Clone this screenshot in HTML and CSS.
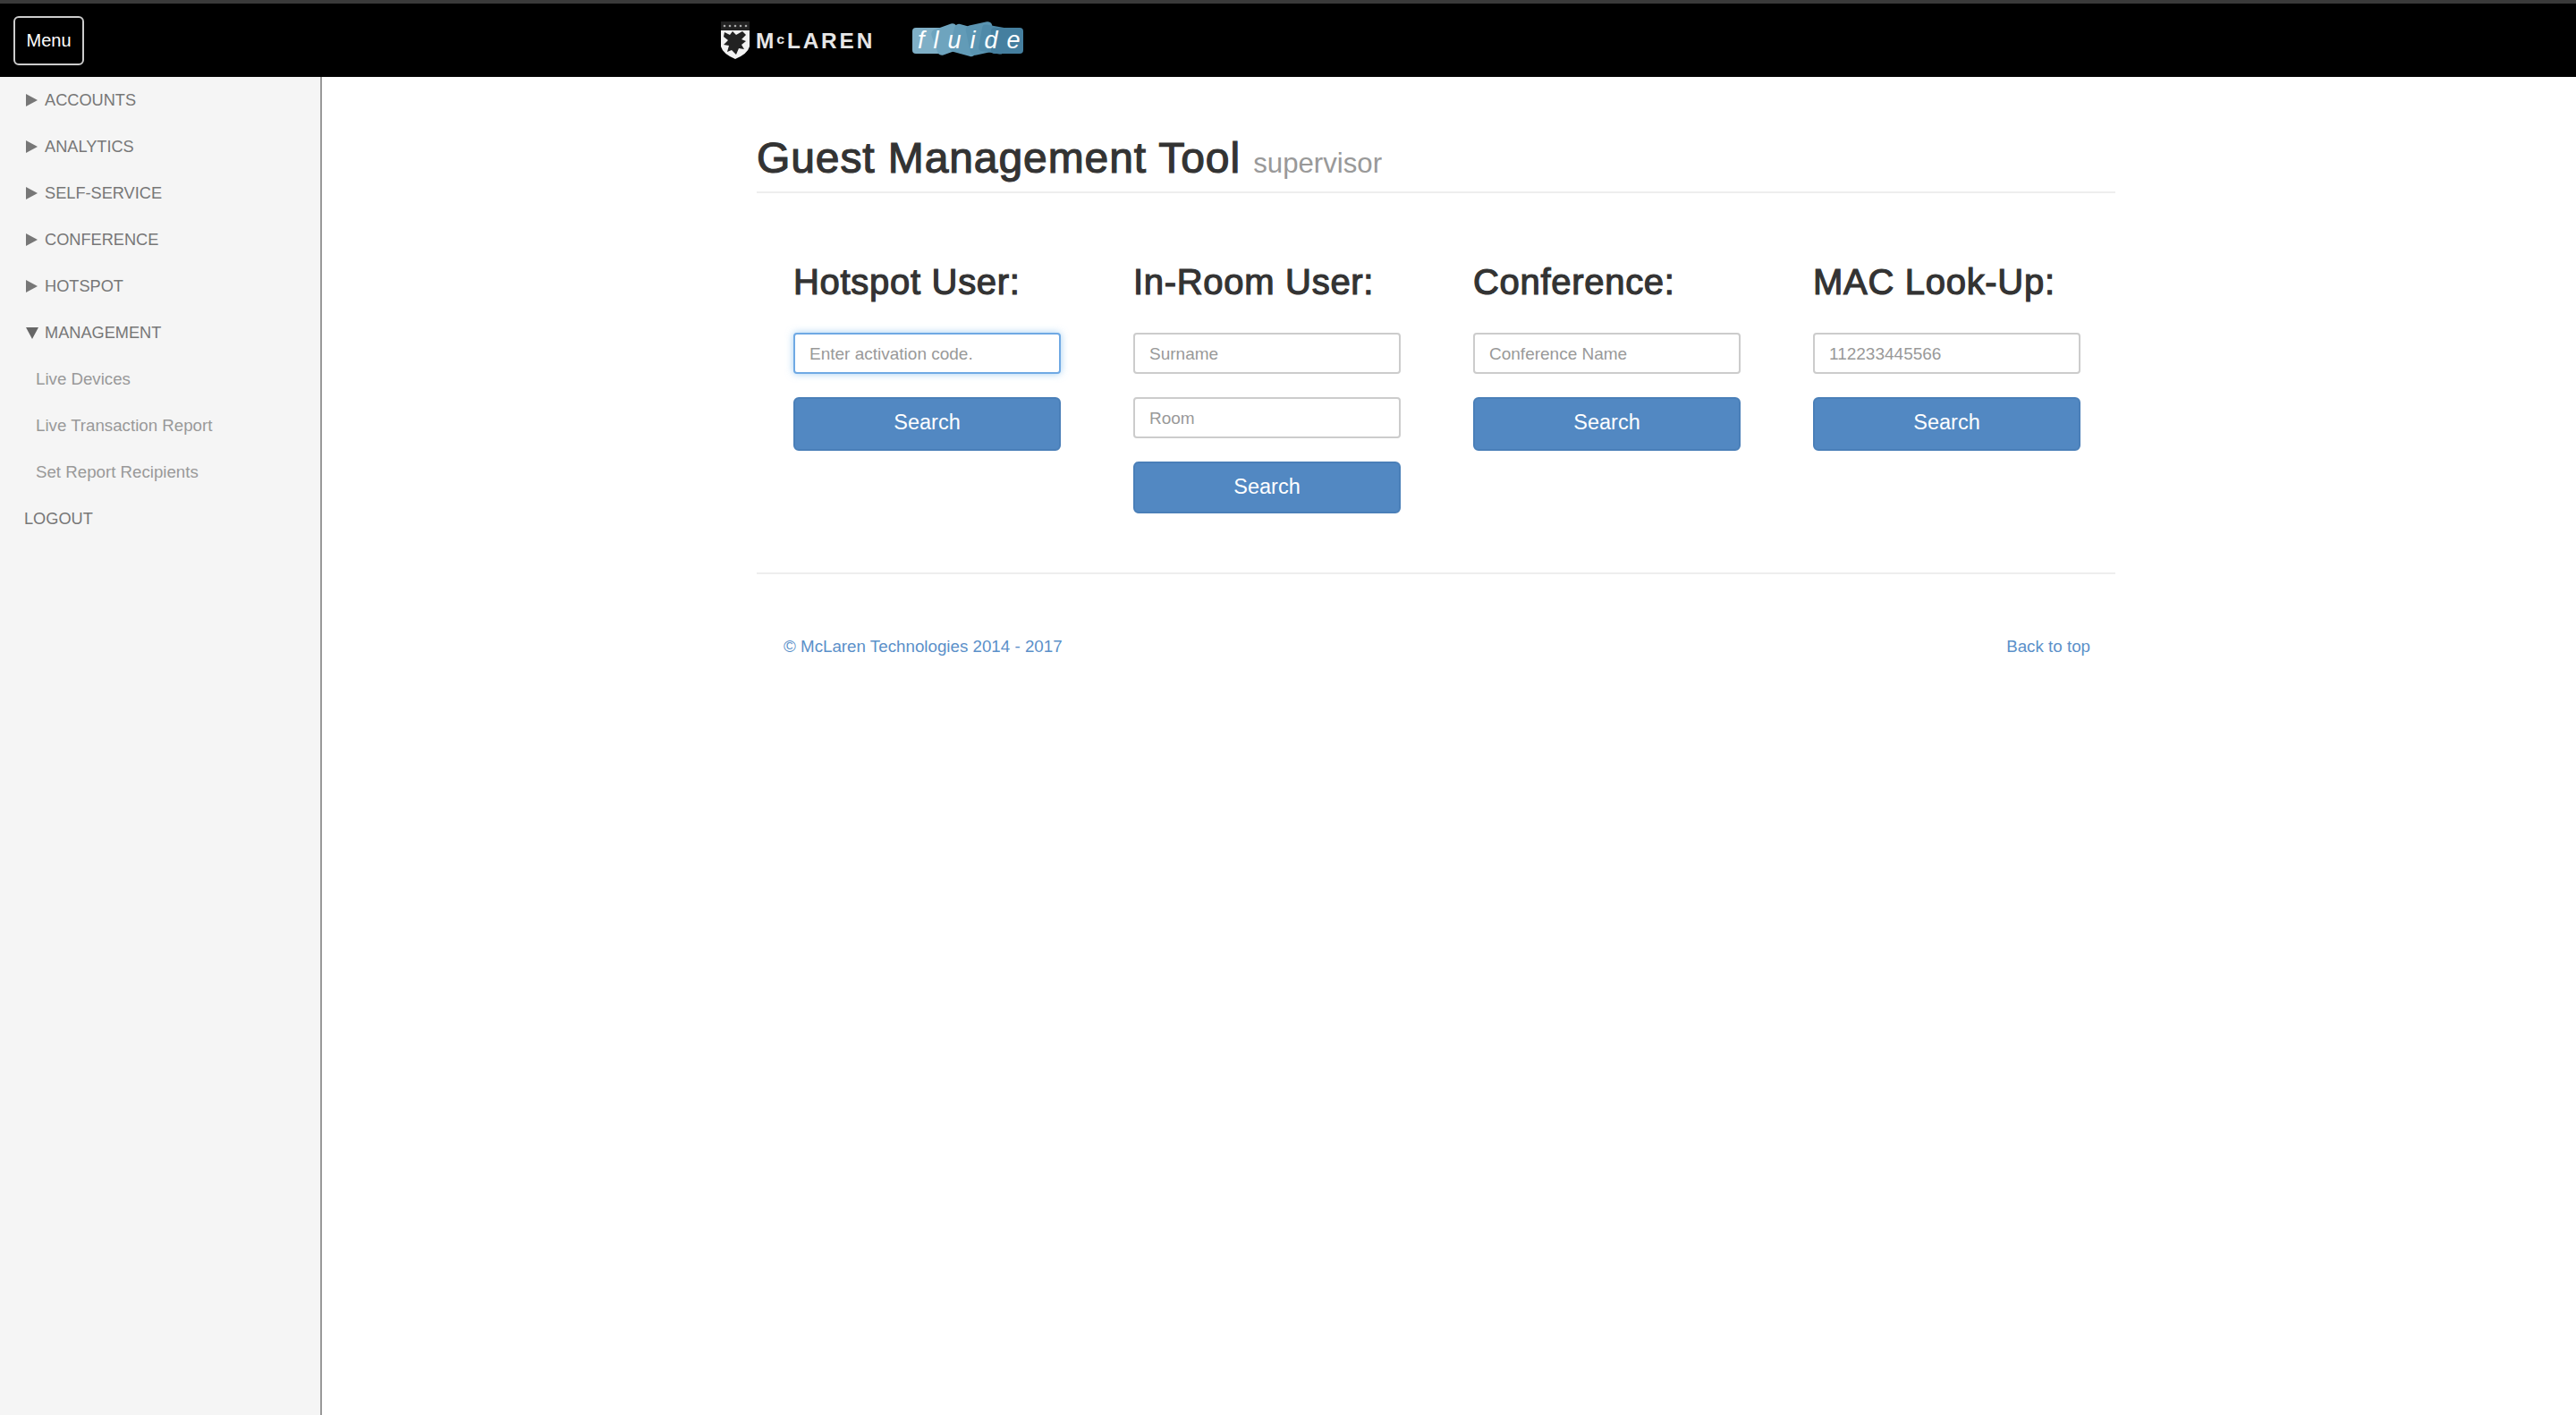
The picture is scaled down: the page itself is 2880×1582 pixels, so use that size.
FILE: index.html
```html
<!DOCTYPE html>
<html lang="en">
<head>
<meta charset="utf-8">
<title>Guest Management Tool</title>
<link rel="stylesheet" href="styles.css">
</head>
<body>
<header class="topbar">
  <button class="menu-btn">Menu</button>
  <div class="brand">
    <svg class="shield" viewBox="0 0 32 42" width="32" height="42">
      <rect x="0" y="0" width="32" height="10" fill="#222"/>
      <g fill="#aaa"><circle cx="4" cy="5" r="1.3"/><circle cx="10" cy="5" r="1.3"/><circle cx="16" cy="5" r="1.3"/><circle cx="22" cy="5" r="1.3"/><circle cx="28" cy="5" r="1.3"/></g>
      <path d="M0 10H32V28Q30 36 16 42Q2 36 0 28Z" fill="#f2f2f2"/>
      <path d="M4 12L10 15L13 11L17 15L24 11L28 15L23 20L28 22L23 26L26 31L20 30L17 37L12 32L7 34L9 27L3 26L8 21L3 17Z" fill="#222"/>
    </svg>
    <span class="mclaren">M<span class="small-c">c</span>LAREN</span>
    <div class="fluide">
      <svg class="fluide-bg" viewBox="0 0 124 44" width="124" height="44">
        <rect x="0" y="8" width="40" height="29" rx="4" fill="#7fafc6"/>
        <rect x="24" y="6" width="30" height="30" rx="5" fill="#6ea4be" transform="rotate(-20 39 21)"/>
        <rect x="44" y="6" width="30" height="32" rx="5" fill="#629bb7" transform="rotate(15 59 22)"/>
        <rect x="62" y="3" width="30" height="34" rx="5" fill="#5a94b1" transform="rotate(-12 77 20)"/>
        <rect x="76" y="6" width="28" height="30" rx="4" fill="#4f8aa9" transform="rotate(10 90 21)"/>
        <rect x="88" y="8" width="36" height="29" rx="4" fill="#457f9f"/>
      </svg>
      <span class="fluide-text">fluide</span>
    </div>
  </div>
</header>
<div class="layout">
  <nav class="sidebar">
    <a class="nav-item"><i class="tri"></i>ACCOUNTS</a>
    <a class="nav-item"><i class="tri"></i>ANALYTICS</a>
    <a class="nav-item"><i class="tri"></i>SELF-SERVICE</a>
    <a class="nav-item"><i class="tri"></i>CONFERENCE</a>
    <a class="nav-item"><i class="tri"></i>HOTSPOT</a>
    <a class="nav-item"><i class="tri down"></i>MANAGEMENT</a>
    <a class="nav-sub">Live Devices</a>
    <a class="nav-sub">Live Transaction Report</a>
    <a class="nav-sub">Set Report Recipients</a>
    <a class="nav-item plain">LOGOUT</a>
  </nav>
  <main class="main">
    <div class="container">
      <h1 class="title">Guest Management Tool <small>supervisor</small></h1>
      <div class="columns">
        <section class="col">
          <h2>Hotspot User:</h2>
          <input class="field focus" placeholder="Enter activation code.">
          <button class="search">Search</button>
        </section>
        <section class="col">
          <h2>In-Room User:</h2>
          <input class="field" placeholder="Surname">
          <input class="field" placeholder="Room">
          <button class="search short">Search</button>
        </section>
        <section class="col">
          <h2>Conference:</h2>
          <input class="field" placeholder="Conference Name">
          <button class="search">Search</button>
        </section>
        <section class="col">
          <h2>MAC Look-Up:</h2>
          <input class="field" placeholder="112233445566">
          <button class="search">Search</button>
        </section>
      </div>
      <footer class="footer">
        <a>© McLaren Technologies 2014 - 2017</a>
        <a>Back to top</a>
      </footer>
    </div>
  </main>
</div>
</body>
</html>
```
FILE: styles.css
```css
* { box-sizing: border-box; }
html, body { margin: 0; height: 100%; overflow: hidden; }
body { font-family: "Liberation Sans", Arial, sans-serif; background: #fff; color: #333; display: flex; flex-direction: column; }
.topbar { height: 86px; flex: none; background: #000; border-top: 4px solid #3a3a3a; display: flex; align-items: center; padding-left: 15px; }
.menu-btn { width: 79px; height: 55px; background: #000; color: #fff; border: 2px solid #ccc; border-radius: 6px; font: 20px "Liberation Sans", Arial, sans-serif; padding: 0; }
.brand { margin-left: 712px; display: flex; align-items: center; }
.shield { display: block; }
.mclaren { color: #e6e6e6; font-size: 23px; font-weight: bold; letter-spacing: 2.7px; margin-left: 7px; transform: scaleX(1.06); transform-origin: left; width: 132px; line-height: 30px; white-space: nowrap; }
.small-c { font-size: 15px; vertical-align: 5px; }
.fluide { position: relative; width: 124px; height: 44px; margin-left: 43px; }
.fluide-bg { display: block; }
.fluide-text { position: absolute; inset: 0; display: block; text-align: center; line-height: 44px; color: #fff; font-style: italic; font-size: 27px; letter-spacing: 10px; padding-left: 6px; }
.layout { flex: 1; display: flex; min-height: 0; }
.sidebar { width: 360px; flex: none; background: #f5f5f5; border-right: 2px solid #999; display: flex; flex-direction: column; }
.nav-item { height: 52px; display: flex; align-items: center; padding-left: 29px; font-size: 18.2px; color: #777; }
.nav-item.plain { padding-left: 27px; }
.nav-sub { height: 52px; display: flex; align-items: center; padding-left: 40px; font-size: 18.7px; color: #999; }
.tri { width: 0; height: 0; border-left: 13px solid #777; border-top: 7px solid transparent; border-bottom: 7px solid transparent; margin-right: 8px; }
.tri.down { border-left: 7px solid transparent; border-right: 7px solid transparent; border-top: 13px solid #666; border-bottom: 0; margin-right: 7px; }
.main { flex: 1; min-width: 0; padding-left: 486px; }
.container { width: 1519px; }
.title { margin: 62px 0 0; height: 68px; font-size: 48px; font-weight: normal; line-height: 58px; color: #333; border-bottom: 2px solid #eee; white-space: nowrap; letter-spacing: .9px; -webkit-text-stroke: 1.2px #333; }
.title small { font-size: 31.2px; font-weight: normal; color: #999; letter-spacing: 0; -webkit-text-stroke: 0; }
.columns { display: flex; gap: 81px; padding: 0 41px; height: 426px; border-bottom: 2px solid #eee; }
.col { width: 299px; flex: none; display: flex; flex-direction: column; }
.col h2 { margin: 76px 0 0; height: 80px; font-size: 40px; font-weight: normal; line-height: 46px; color: #333; white-space: nowrap; letter-spacing: .7px; -webkit-text-stroke: 1.2px #333; }
.field { display: block; width: 100%; height: 46px; margin: 0 0 26px; padding: 1px 16px 0; border: 2px solid #ccc; border-radius: 4px; font: 19px "Liberation Sans", Arial, sans-serif; background: #fff; color: #555; }
.field::placeholder { color: #999; opacity: 1; }
.field.focus { border-color: #6fa9e4; box-shadow: 0 0 8px rgba(102,175,233,.6); }
.search { display: block; width: 100%; height: 60px; background: #5288c2; border: 2px solid #4a7fb8; border-radius: 6px; color: #fff; font: 23.5px "Liberation Sans", Arial, sans-serif; padding: 0 0 3px; }
.search.short { height: 58px; padding: 0 0 1px; }
.footer { display: flex; justify-content: space-between; padding: 69px 28px 0 30px; font-size: 18.75px; line-height: 24px; color: #5b90c9; }
```
